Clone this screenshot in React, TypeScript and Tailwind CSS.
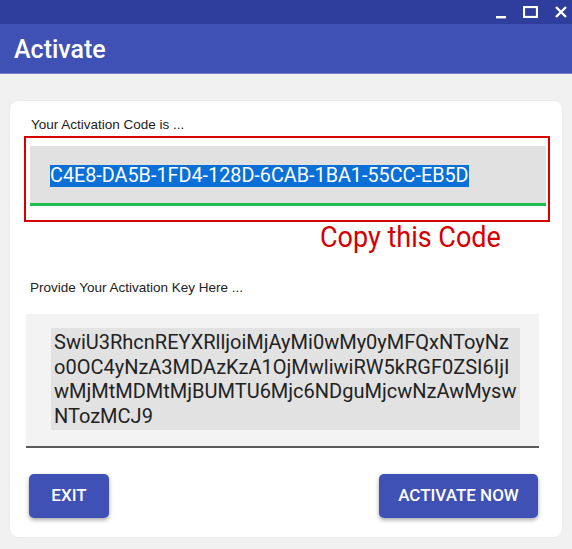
const keyLines = [
  "SwiU3RhcnREYXRlljoiMjAyMi0wMy0yMFQxNToyNz",
  "o0OC4yNzA3MDAzKzA1OjMwliwiRW5kRGF0ZSI6IjI",
  "wMjMtMDMtMjBUMTU6Mjc6NDguMjcwNzAwMysw",
  "NTozMCJ9",
];

export default function App() {
  return (
    <div className="flex flex-col w-[572px] h-[549px] overflow-hidden bg-[#f1f1f1] font-['Roboto',sans-serif]">
      {/* Window title bar */}
      <div className="flex items-center justify-end h-[24px] bg-[#2f3d9c] pr-[5px]">
        <svg width="12" height="12" viewBox="0 0 12 12" className="mr-[16px] mt-[2px] ml-[2px]">
          <rect x="1" y="9" width="10" height="2.4" fill="#fff" />
        </svg>
        <svg width="15" height="12" viewBox="0 0 15 12" className="mr-[17px]">
          <rect x="1" y="1" width="13" height="10" fill="none" stroke="#fff" strokeWidth="2.2" />
        </svg>
        <svg width="12" height="12" viewBox="0 0 12 12">
          <path d="M1 1 L11 11 M11 1 L1 11" stroke="#fff" strokeWidth="2.4" />
        </svg>
      </div>

      {/* Header */}
      <div className="flex items-center h-[50px] bg-[#3f51b5] border-b border-[#7683cc] pl-[14px]">
        <span className="text-[25px] font-medium text-white mt-[2px]">Activate</span>
      </div>

      {/* Body */}
      <div className="px-[10px] pt-[27px]">
        <div className="flex flex-col h-[436px] bg-white rounded-[8px] shadow-[0_0_2px_rgba(0,0,0,0.08)] pt-[16px]">
          <div className="ml-[21px] text-[13.5px] leading-[16px] text-[#222] font-['Liberation_Sans',sans-serif]">
            Your Activation Code is ...
          </div>

          {/* Activation code box */}
          <div className="ml-[14px] mt-[3px] w-[526px] border-2 border-[#d50000] pt-[8px] pb-[14px] pl-[4px] pr-[2px]">
            <div className="flex items-center h-[57px] bg-[#e1e1e1] pl-[20px] pt-[3px]">
              <span className="bg-[#0a6fd6] text-white text-[19.8px] leading-[22px]">
                C4E8-DA5B-1FD4-128D-6CAB-1BA1-55CC-EB5D
              </span>
            </div>
            <div className="h-[3px] bg-[#1fbf4f]" />
          </div>

          <div className="ml-[310px] text-[30px] leading-[30px] text-[#d40000] scale-x-[0.9] origin-left whitespace-nowrap">
            Copy this Code
          </div>

          <div className="ml-[20px] mt-[28px] text-[13.5px] leading-[16px] text-[#222] font-['Liberation_Sans',sans-serif]">
            Provide Your Activation Key Here ...
          </div>

          {/* Activation key box */}
          <div className="ml-[16px] mt-[18px] w-[513px] h-[134px] bg-[#f3f3f3] border-b-2 border-[#5a5a5a] pt-[14px] pl-[25px]">
            <div className="w-[469px] h-[102px] bg-[#e2e2e2] pl-[3px] pt-[2px] text-[20px] leading-[24.6px] text-[#222]">
              {keyLines.map((line) => (
                <div key={line} className="whitespace-nowrap">
                  {line}
                </div>
              ))}
            </div>
          </div>

          {/* Buttons */}
          <div className="flex items-center justify-between mt-[26px] pl-[19px] pr-[24px]">
            <button className="w-[80px] h-[44px] rounded-[5px] bg-[#3f51b5] text-white text-[17px] font-medium shadow-[0_2px_4px_rgba(0,0,0,0.35)]">
              EXIT
            </button>
            <button className="w-[159px] h-[44px] rounded-[5px] bg-[#3f51b5] text-white text-[17px] font-medium shadow-[0_2px_4px_rgba(0,0,0,0.35)]">
              ACTIVATE NOW
            </button>
          </div>
        </div>
      </div>
    </div>
  );
}
